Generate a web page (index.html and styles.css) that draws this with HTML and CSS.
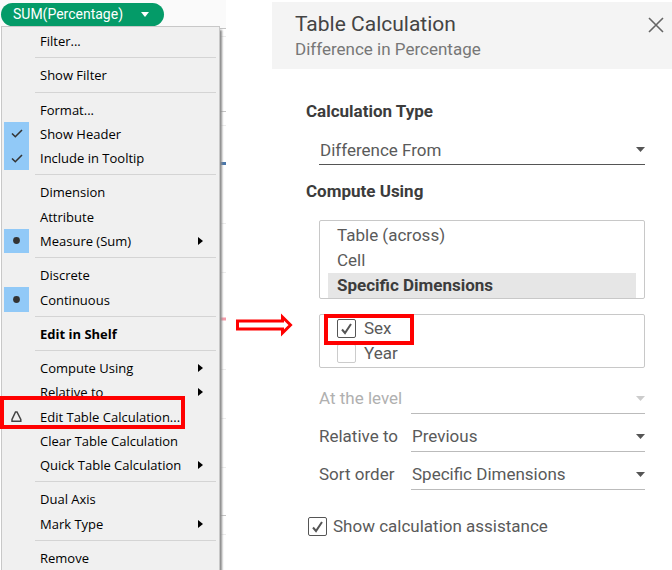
FILE: index.html
```html
<!DOCTYPE html>
<html lang="en">
<head>
<meta charset="utf-8">
<title>Table Calculation</title>
<link rel="stylesheet" href="styles.css">
</head>
<body>
<main class="page">
  <section class="shelf">
    <svg class="chart" viewBox="0 0 6 570" preserveAspectRatio="none" aria-hidden="true">
      <path d="M0 28.5H6M0 111.5H6M0 515.5H6" stroke="#c4c4c4"/>
      <path d="M0 36.5H6M0 125.5H6M0 223.5H6M0 272.5H6M0 369.5H6M0 418.5H6M0 467.5H6M0 534.5H6" stroke="#ececec"/>
      <path d="M0 163.500H6" stroke="#4a77ab" stroke-width="3"/>
      <path d="M0 319H6" stroke="#f59aa8" stroke-width="3"/>
    </svg>
    <button class="pill" type="button">SUM(Percentage)
      <svg width="8" height="5" viewBox="0 0 8 5" aria-hidden="true"><path d="M0 0H8L4 5Z" fill="#fff"/></svg>
    </button>
    <div class="menu" role="menu">
      <button class="item" type="button">Filter...</button>
      <hr>
      <button class="item" type="button">Show Filter</button>
      <hr>
      <button class="item" type="button">Format...</button>
      <button class="item" type="button"><span class="mark on"><svg width="12" height="9" viewBox="0 0 12 9"><path d="M1 4.500L4.300 7.700L11 1" fill="none" stroke="#333" stroke-width="1.600"/></svg></span>Show Header</button>
      <button class="item" type="button"><span class="mark on"><svg width="12" height="9" viewBox="0 0 12 9"><path d="M1 4.500L4.300 7.700L11 1" fill="none" stroke="#333" stroke-width="1.600"/></svg></span>Include in Tooltip</button>
      <hr>
      <button class="item" type="button">Dimension</button>
      <button class="item" type="button">Attribute</button>
      <button class="item" type="button"><span class="mark on"><svg width="7" height="7" viewBox="0 0 7 7"><circle cx="3.500" cy="3.500" r="3.400" fill="#333"/></svg></span>Measure (Sum)<svg class="sub" width="5" height="8" viewBox="0 0 5 8"><path d="M0 0L5 4L0 8Z"/></svg></button>
      <hr>
      <button class="item" type="button">Discrete</button>
      <button class="item" type="button"><span class="mark on"><svg width="7" height="7" viewBox="0 0 7 7"><circle cx="3.500" cy="3.500" r="3.400" fill="#333"/></svg></span>Continuous</button>
      <hr>
      <button class="item strong" type="button">Edit in Shelf</button>
      <hr>
      <button class="item" type="button">Compute Using<svg class="sub" width="5" height="8" viewBox="0 0 5 8"><path d="M0 0L5 4L0 8Z"/></svg></button>
      <button class="item" type="button">Relative to<svg class="sub" width="5" height="8" viewBox="0 0 5 8"><path d="M0 0L5 4L0 8Z"/></svg></button>
      <button class="item" type="button"><span class="mark"><svg width="11" height="12" viewBox="0 0 11 12"><path d="M4.500 1H6L9.800 8.500V10.200H1V8.500Z" fill="none" stroke="#444" stroke-width="1.500"/></svg></span>Edit Table Calculation...<span class="callout callout-menu"></span></button>
      <button class="item" type="button">Clear Table Calculation</button>
      <button class="item" type="button">Quick Table Calculation<svg class="sub" width="5" height="8" viewBox="0 0 5 8"><path d="M0 0L5 4L0 8Z"/></svg></button>
      <hr>
      <button class="item" type="button">Dual Axis</button>
      <button class="item" type="button">Mark Type<svg class="sub" width="5" height="8" viewBox="0 0 5 8"><path d="M0 0L5 4L0 8Z"/></svg></button>
      <hr>
      <button class="item" type="button">Remove</button>
    </div>
  </section>

  <section class="panel">
    <svg class="arrow" width="58" height="25" viewBox="0 0 58 25" aria-hidden="true"><path d="M1.500 8H46.500V4L54.500 12L46.500 20V16H1.500Z" fill="#fff" stroke="#f00" stroke-width="3"/></svg>
    <header class="head">
      <div>
        <h1>Table Calculation</h1>
        <p>Difference in Percentage</p>
      </div>
      <button class="close" type="button" aria-label="Close"><svg width="16" height="16" viewBox="0 0 16 16"><path d="M1 1L15 15M15 1L1 15" stroke="#666" stroke-width="1.600"/></svg></button>
    </header>
    <form class="body">
      <h2 id="type">Calculation Type</h2>
      <div class="drop main">
        <select aria-labelledby="type"><option>Difference From</option></select>
        <svg width="9" height="5" viewBox="0 0 9 5"><path d="M0 0H9L4.500 5Z"/></svg>
      </div>
      <h2 id="using" class="using">Compute Using</h2>
      <ul class="list" role="listbox" aria-labelledby="using">
        <li role="option">Table (across)</li>
        <li role="option">Cell</li>
        <li role="option" aria-selected="true">Specific Dimensions</li>
      </ul>
      <div class="dims">
        <label class="check"><span class="box"><input type="checkbox" checked><svg width="19" height="19" viewBox="0 0 19 19"><path d="M5 10.500L8 14L14 5" fill="none" stroke="#555" stroke-width="2"/></svg></span>Sex</label>
        <label class="check"><span class="box"><input type="checkbox"></span>Year</label>
        <span class="callout callout-dim"></span>
      </div>
      <div class="rows">
        <label class="off" for="level">At the level</label>
        <div class="drop off">
          <select id="level" disabled><option></option></select>
          <svg width="9" height="5" viewBox="0 0 9 5"><path d="M0 0H9L4.500 5Z"/></svg>
        </div>
        <label for="relative">Relative to</label>
        <div class="drop">
          <select id="relative"><option>Previous</option></select>
          <svg width="9" height="5" viewBox="0 0 9 5"><path d="M0 0H9L4.500 5Z"/></svg>
        </div>
        <label for="order">Sort order</label>
        <div class="drop">
          <select id="order"><option>Specific Dimensions</option></select>
          <svg width="9" height="5" viewBox="0 0 9 5"><path d="M0 0H9L4.500 5Z"/></svg>
        </div>
      </div>
      <label class="check assist"><span class="box"><input type="checkbox" checked><svg width="19" height="19" viewBox="0 0 19 19"><path d="M5 10.500L8 14L14 5" fill="none" stroke="#555" stroke-width="2"/></svg></span>Show calculation assistance</label>
    </form>
  </section>
</main>
</body>
</html>
```
FILE: styles.css
```css
* { box-sizing: border-box; }

body {
  margin: 0;
  background: #fff;
  color: #5a5a5a;
  font: 17px/24px Roboto, "Liberation Sans", sans-serif;
}

h1, h2, p, ul { margin: 0; padding: 0; font-weight: inherit; }
button, select { font: inherit; color: inherit; border: 0; background: none; padding: 0; margin: 0; }

.page {
  display: grid;
  grid-template-columns: 226px minmax(0, 1fr);
  column-gap: 46px;
  min-height: 100vh;
}

/* Shelf with its context menu */
.shelf {
  position: relative;
  display: flex;
  flex-direction: column;
  align-items: flex-start;
  padding: 3px 6px 0 1px;
  background: linear-gradient(#fafafa 28px, #fff 28px);
}

.chart { position: absolute; top: 0; right: 0; width: 6px; height: 100%; }

.pill {
  display: flex;
  align-items: center;
  justify-content: space-between;
  width: 163px;
  height: 23px;
  padding: 0 15px 0 12px;
  border-radius: 12px;
  background: #049b68;
  color: #fff;
  font: 14px/23px Roboto, sans-serif;
}

.menu {
  position: relative;
  flex: 1;
  display: flex;
  flex-direction: column;
  align-self: stretch;
  padding: 2px 3px 0 2px;
  border: 1px solid #c8c8c8;
  border-bottom: 0;
  background: #f0f0f0;
  box-shadow: 2px 4px 2px #8c8c8c;
  font: 13px/24px "Open Sans", sans-serif;
  color: #000;
}

.menu hr {
  width: calc(100% - 31px);
  height: 1px;
  margin: 4px 0 5px 31px;
  border: 0;
  background: #d4d4d4;
}

.item {
  position: relative;
  flex: 1 1 24px;
  display: flex;
  align-items: center;
  padding: 0 13px 0 36px;
  text-align: left;
}

.strong { font-weight: 700; }
.sub { margin-left: auto; }

.mark {
  position: absolute;
  left: 0;
  top: 0;
  bottom: 0;
  width: 25px;
  display: flex;
  align-items: center;
  justify-content: center;
}

.on { background: #91c9f7; }

.callout { position: absolute; z-index: 2; border: 4px solid #f00; pointer-events: none; }
.callout-menu { left: -4px; top: -8px; width: 185px; height: 33px; }
.callout-dim { left: 4px; top: -1px; width: 90px; height: 31px; }

/* Calculation panel */
.panel { position: relative; padding-top: 2px; }

.arrow { position: absolute; left: -36px; top: 313px; }

.head {
  display: flex;
  justify-content: space-between;
  align-items: flex-start;
  padding: 9px 8px 8px 23px;
  background: #f4f4f4;
}

.head h1 { font-size: 21px; line-height: 26px; color: #444; }
.head p { color: #777; }
.close { display: flex; margin-top: 6px; }

.body { padding: 31px 27px 0 34px; }

h2 { font-size: 17px; line-height: 22px; font-weight: 700; color: #3c3c3c; }
.using { margin-top: 15px; }

.drop { position: relative; border-bottom: 1px solid #bbb; }
.drop select { display: block; width: 100%; height: 29px; padding: 0 16px 0 1px; appearance: none; }
.drop svg { position: absolute; right: 0; top: 12px; fill: #555; pointer-events: none; }
.main { margin: 13px 0 0 13px; border-color: #555; }
.off { color: #b0b0b0; }
.drop.off svg { fill: #ccc; }

.list, .dims {
  position: relative;
  margin-left: 13px;
  border: 1px solid #c8c8c8;
  border-radius: 2px;
}

.list { margin-top: 18px; padding: 2px 8px 0; list-style: none; }
.list li { padding-left: 9px; line-height: 25px; }
.list [aria-selected] { background: #e6e6e6; color: #3c3c3c; font-weight: 700; }

.dims { margin-top: 15px; padding: 1px 17px; }
.check { display: flex; align-items: center; gap: 8px; line-height: 25px; }

.box { position: relative; display: flex; }
.box input {
  appearance: none;
  width: 19px;
  height: 19px;
  margin: 0;
  border: 1px solid #ccc;
  border-radius: 2px;
  background: #fff;
}
.box input:checked { border-color: #555; }
.box svg { position: absolute; left: 0; top: 0; pointer-events: none; }

.rows {
  display: grid;
  grid-template-columns: 92px minmax(0, 1fr);
  gap: 8px 0;
  margin: 16px 0 0 13px;
  line-height: 29px;
}

.assist { gap: 6px; margin: 24px 0 0 2px; }
```
